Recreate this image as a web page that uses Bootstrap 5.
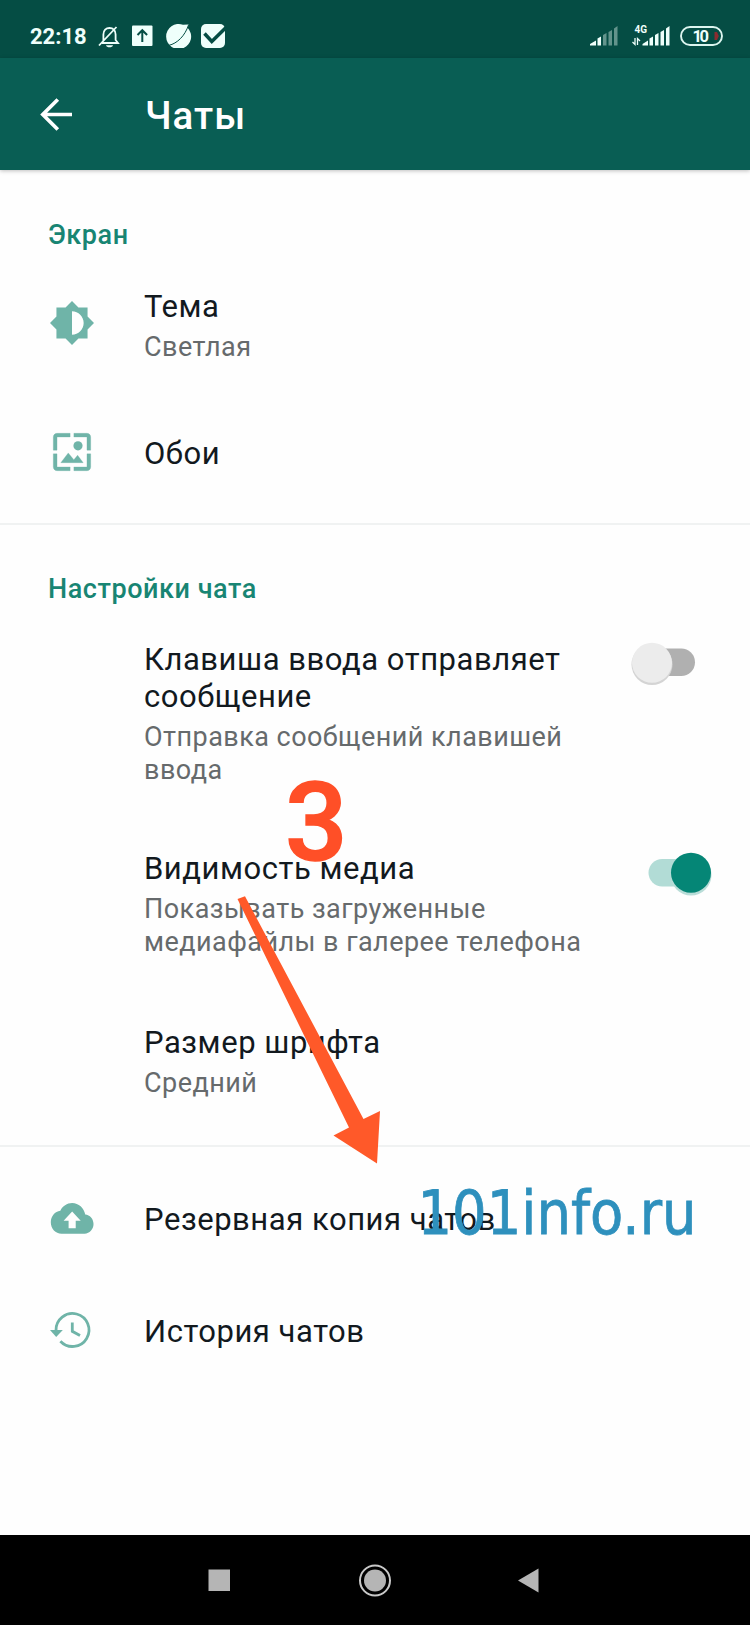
<!DOCTYPE html>
<html lang="ru">
<head>
<meta charset="utf-8">
<meta name="viewport" content="width=device-width, initial-scale=1">
<title>Чаты</title>
<link href="https://cdn.jsdelivr.net/npm/bootstrap@5.3.0/dist/css/bootstrap.min.css" rel="stylesheet">
<style>
body{font-family:Roboto,"Liberation Sans",sans-serif;width:750px;height:1625px;background:#fefefe;overflow:hidden}
svg{display:block;flex:none}
.status-bar{height:58px;background:#054d44;padding:24px 27px 0 30px;color:#effffb}
.clock{font-size:22px;font-weight:700;line-height:26px;width:68px}
.app-bar{height:112px;background:#095e54;padding-left:36px;box-shadow:0 1px 4px rgba(0,0,0,.25)}
.app-title{font-size:38.500px;font-weight:500;line-height:46px;color:#fff;margin:4px 0 0 65px;letter-spacing:1px}
.content-area{height:1365px}
.group-label{font-size:27px;line-height:33px;font-weight:500;color:#188573;padding-left:48px;letter-spacing:.55px}
.opt{padding-left:48px;padding-right:45px}
.opt-icon{width:96px;color:#6fb4a8}
.opt-text{width:450px}
.opt-title{font-size:31px;line-height:37px;color:#12191e;letter-spacing:.54px}
.opt-sub{font-size:27px;line-height:33px;color:#666a6c;margin-top:6px;letter-spacing:.46px}
.rule{height:2px;background:#f0f2f2}
.nav-area{height:90px;background:#000}
</style>
</head>
<body class="position-relative">
<header>
  <div class="status-bar d-flex align-items-start">
    <span class="clock">22:18</span>
    <svg width="130" height="24" viewBox="98 24 130 24" fill="none" stroke="#effffb" stroke-width="1.8">
      <path d="M102 43H118L115.600 40V34.500C115.600 30.500 113 28 109.500 28S103.400 30.500 103.400 34.500V41M99 45.500L116.500 27"/><path d="M106 45.200H113C112.400 48 106.600 48 106 45.200Z" fill="#effffb" stroke="none"/>
      <rect x="132" y="25.500" width="20.500" height="20.500" rx="1" fill="#effffb" stroke="none"/><path d="M142.300 42V31M137.500 35L142.300 30.200L147.100 35" stroke="#054d44" stroke-width="2"/>
      <path d="M188.500 24.500L187.800 28A12.500 12.500 0 1 1 183 24.800Z" fill="#effffb" stroke="none"/><path d="M169 45.300C177 43.500 185 36 188.500 25" stroke="#054d44" stroke-width="1"/>
      <rect x="201" y="24" width="24" height="24" rx="5" fill="#effffb" stroke="none"/><path d="M204.500 33.500L211.800 41.500L226 27.500" stroke="#054d44" stroke-width="3.500"/>
    </svg>
    <svg class="ms-auto" width="136" height="26" viewBox="586 24 136 26">
      <g fill="#effffb"><path d="M589 45.500V44L595 40.500V45.500ZM596.500 45.500V38.500L600 36.500V45.500Z"/><path opacity=".4" d="M602 45.500V35L605.500 33V45.500ZM607.500 45.500V32L611 30V45.500ZM613 45.500V28.500L616.500 26V45.500Z"/>
      <path d="M641.500 45.500V44L647 40.500V45.500ZM648.500 45.500V38.500L652 36.500V45.500ZM654 45.500V35L657.500 33V45.500ZM659.500 45.500V32L663 30V45.500ZM665 45.500V28.500L668.500 26V45.500Z"/></g>
      <text x="633.500" y="33" font-size="10" font-weight="700" fill="#effffb">4G</text>
      <path d="M634 38V44.500L631.500 42M636.500 45V38.500L639 41" fill="none" stroke="#effffb" stroke-width="1.300"/>
      <rect x="680" y="27" width="41" height="18" rx="9" fill="none" stroke="#dcf5ef" stroke-width="1.900"/>
      <text x="691.500" y="41.700" font-size="16.500" font-weight="700" fill="#effffb" textLength="16.500">10</text>
      <path d="M713.500 32H716L717.800 36L716 40H713.500Z" fill="#8a2c30"/>
    </svg>
  </div>
  <div class="app-bar d-flex align-items-center">
    <svg width="44" height="44" viewBox="36 92 44 44" fill="none" stroke="#fff" stroke-width="3.700"><path d="M72 114.500H43M57.800 99.500L42.800 114.500L57.800 129.500"/></svg>
    <h1 class="app-title">Чаты</h1>
  </div>
</header>
<main class="content-area">
  <section>
    <h2 class="group-label mb-0" style="padding-top:49px">Экран</h2>
    <div class="opt d-flex" style="padding-top:36px">
      <div class="opt-icon"><svg width="48" height="48" viewBox="0 0 48 48" fill="currentColor" style="margin-top:11px"><path transform="translate(.66 .66) scale(1.945)" d="M20 15.310L23.310 12 20 8.690V4h-4.690L12 .69 8.690 4H4v4.690L.69 12 4 15.310V20h4.690L12 23.310 15.310 20H20v-4.690zM12 18V6c3.310 0 6 2.690 6 6s-2.690 6-6 6z"/></svg></div>
      <div class="opt-text"><div class="opt-title">Тема</div><div class="opt-sub">Светлая</div></div>
    </div>
    <div class="opt d-flex" style="padding-top:71px;height:159px">
      <div class="opt-icon"><svg width="48" height="48" viewBox="0 0 48 48" fill="currentColor" style="margin-top:-7px"><g transform="translate(1.560 1.560) scale(1.870)"><path d="M4 4h7V2H4c-1.100 0-2 .9-2 2v7h2V4zm6 8.500l-4 5.200h12l-3-4-2.030 2.400zM20 2h-7v2h7v7h2V4c0-1.100-.9-2-2-2zm0 18h-7v2h7c1.100 0 2-.9 2-2v-7h-2v7zM4 13H2v7c0 1.100.9 2 2 2h7v-2H4v-7z" stroke="currentColor" stroke-width=".15"/><circle cx="15.200" cy="8.700" r="2.450"/></g></svg></div>
      <div class="opt-text"><div class="opt-title">Обои</div></div>
    </div>
  </section>
  <div class="rule"></div>
  <section>
    <h2 class="group-label mb-0" style="padding-top:48px">Настройки чата</h2>
    <div class="opt d-flex" style="padding-top:35px">
      <div class="opt-icon"></div>
      <div class="opt-text"><div class="opt-title">Клавиша ввода отправляет<br>сообщение</div><div class="opt-sub">Отправка сообщений клавишей<br>ввода</div></div>
      <svg class="ms-auto" width="80" height="48" viewBox="625 641 80 48"><rect x="645" y="648.500" width="50" height="27.500" rx="13.750" fill="#b0b0b0"/><circle cx="652" cy="664.500" r="20.500" fill="#d4d4d4"/><circle cx="652" cy="662.800" r="20" fill="#ececec"/></svg>
    </div>
    <div class="opt d-flex" style="padding-top:63px">
      <div class="opt-icon"></div>
      <div class="opt-text"><div class="opt-title">Видимость медиа</div><div class="opt-sub">Показывать загруженные<br>медиафайлы в галерее телефона</div></div>
      <svg class="ms-auto" width="80" height="48" viewBox="632 850 80 48" style="margin-right:-7px"><rect x="648.500" y="859" width="55" height="27.500" rx="13.750" fill="#b2dcd6"/><circle cx="691" cy="875" r="20.500" fill="#b9ddd8"/><circle cx="691" cy="872.700" r="20" fill="#058676"/></svg>
    </div>
    <div class="opt d-flex" style="padding-top:65px;height:186px">
      <div class="opt-icon"></div>
      <div class="opt-text"><div class="opt-title">Размер шрифта</div><div class="opt-sub">Средний</div></div>
    </div>
  </section>
  <div class="rule"></div>
  <section>
    <div class="opt d-flex" style="padding-top:54px">
      <div class="opt-icon"><svg width="48" height="48" viewBox="0 0 48 48" fill="currentColor" style="margin-top:-7px"><path transform="translate(2.800 1.300) scale(1.780 1.920)" d="M19.350 10.040C18.670 6.590 15.640 4 12 4 9.110 4 6.600 5.640 5.350 8.040 2.340 8.360 0 10.910 0 14c0 3.310 2.690 6 6 6h13c2.760 0 5-2.240 5-5 0-2.640-2.050-4.780-4.650-4.960zM14 13.200v4h-4v-4H7.200l4.800-4.700 4.800 4.700h-2.800z"/></svg></div>
      <div class="opt-text"><div class="opt-title">Резервная копия чатов</div></div>
    </div>
    <div class="opt d-flex" style="padding-top:71px">
      <div class="opt-icon"><svg width="48" height="48" viewBox="0 0 48 48" fill="none" stroke="currentColor" stroke-width="2.800" style="margin-top:-7px"><path d="M8 24.500A16.500 16.500 0 1 1 12.400 35.200M24.300 16.500V25.300L32 29.500"/><path d="M2 24H14.800L8.200 31Z" fill="currentColor" stroke="none"/></svg></div>
      <div class="opt-text"><div class="opt-title">История чатов</div></div>
    </div>
  </section>
</main>
<footer class="nav-area">
  <svg width="750" height="90" viewBox="0 1535 750 90" fill="#b5b5b5"><rect x="208.500" y="1569.500" width="21.500" height="21.500"/><circle cx="375" cy="1580.500" r="11"/><circle cx="375" cy="1580.500" r="15" fill="none" stroke="#c8c8c8" stroke-width="2"/><path d="M518 1580.500L538.500 1568.500V1592.500Z"/></svg>
</footer>
<!-- Annotations over the settings list -->
<svg class="position-absolute top-0 start-0" width="750" height="1625" viewBox="0 0 750 1625">
  <text x="285" y="859.500" font-size="110" font-weight="500" fill="#ff4f27" stroke="#ff4f27" stroke-width="1.500">3</text>
  <path d="M237.500 899L245 896.300L363.500 1119L380 1111L377 1163.500L333.500 1135.500L349 1127.500Z" fill="#ff5929"/>
  <text x="417.500" y="1234" font-family="DejaVu Sans" font-size="61" fill="#2e90bd" stroke="#2e90bd" stroke-width=".8" textLength="279" lengthAdjust="spacingAndGlyphs">101info.ru</text>
</svg>
<script src="https://cdn.jsdelivr.net/npm/bootstrap@5.3.0/dist/js/bootstrap.bundle.min.js"></script>
</body>
</html>
